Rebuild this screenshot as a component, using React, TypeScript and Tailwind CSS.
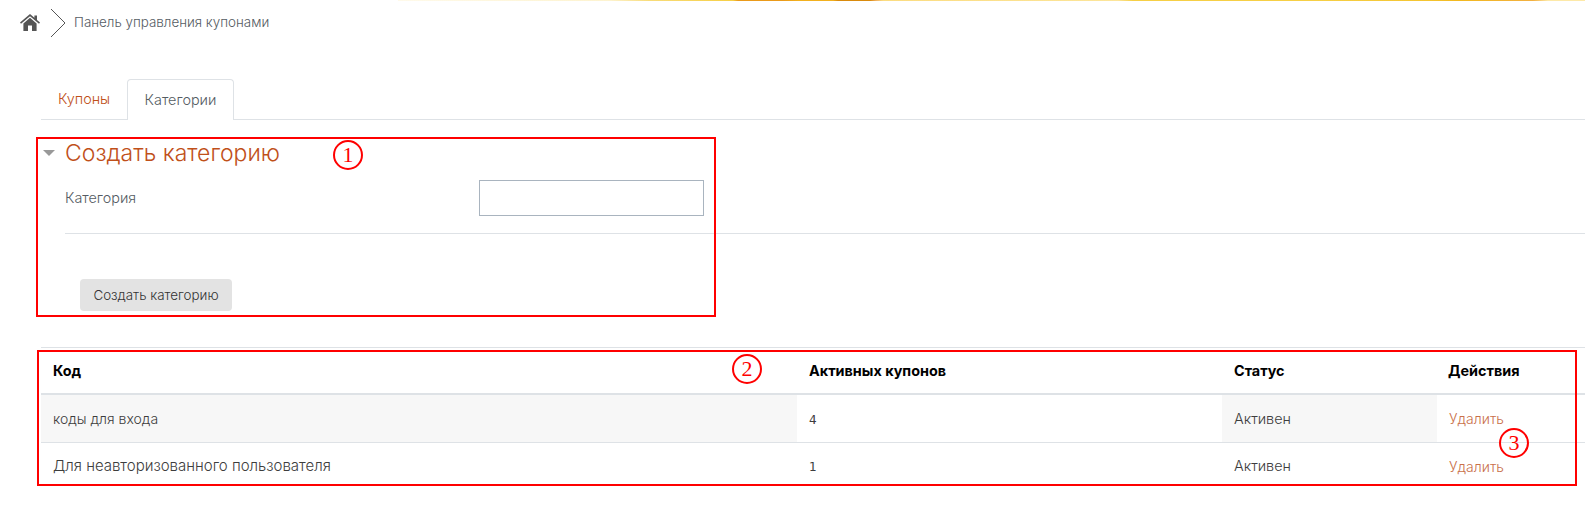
const font = "font-['Inter','Noto_Sans',sans-serif]";

function Marker({ n, className }: { n: number; className: string }) {
  return (
    <div className={`absolute flex h-[30px] w-[30px] items-center justify-center rounded-full border-2 border-[#ff0000] font-['Liberation_Serif',serif] text-[22px] leading-none text-[#ff0000] ${className}`}>
      {n}
    </div>
  );
}

const rows = [
  { code: 'коды для входа', size: 'h-[48px] text-[14px]', count: '4', striped: true },
  { code: 'Для неавторизованного пользователя', size: 'h-[46px] text-[15px]', count: '1', striped: false },
];

export default function App() {
  return (
    <div className={`relative h-[521px] w-[1585px] overflow-hidden bg-white text-[14.4px] font-light text-[#3d3d3d] ${font}`}>
      {/* top stripe */}
      <div className="ml-[398px] h-px bg-[linear-gradient(90deg,#fffaea_0px,#fdf3cf_212px,#f8dc7a_250px,#f6cf45_335px,#ea9a1a_340px,#ea9a1a_385px,#f2b01e_400px,#f2b01e_435px,#d98a0c_440px,#d98a0c_472px,#f0b060_478px,#fbdc80_485px,#fce59a_720px,#f6cf45_735px,#f6cf45_920px,#f4c430_1030px,#f2b81e_1060px,#f2b040_1135px,#fde9a8_1150px,#fde9a8_1187px)]" />

      {/* breadcrumb */}
      <div className="flex h-[43px] items-center pl-5">
        <svg viewBox="0 0 20 17" className="h-[17px] w-5 fill-[#555555]">
          <path d="M10 0 0 8.6l1 1.1L10 2.2l9 7.5 1-1.1-3-2.6V1.4h-2.6v2.4z" />
          <path d="M10 3.8 3.4 9.4V17h4.6v-5.4h4V17h4.6V9.4z" />
        </svg>
        <svg viewBox="0 0 16 30" className="ml-[10px] h-[30px] w-4 fill-none stroke-[#555555]">
          <path d="M1 1l14 14L1 29" />
        </svg>
        <span className="ml-2 text-[13.4px] text-[#555c63]">Панель управления купонами</span>
      </div>

      {/* tabs */}
      <div className="ml-[41px] mt-[35px] flex h-[41px] border-b border-[#dee2e6]">
        <div className="flex w-[86px] items-center justify-center text-[#c0501a]">Купоны</div>
        <div className="-mb-px flex h-[41px] w-[107px] items-center justify-center rounded-t border border-b-0 border-[#dee2e6] bg-white text-[#555c63]">Категории</div>
      </div>

      {/* create category form */}
      <div className="mt-[18px] flex items-center pl-[43px]">
        <div className="h-0 w-0 border-x-[6px] border-t-[6px] border-x-transparent border-t-[#999999]" />
        <h3 className="ml-[10px] text-[23px] leading-[30px] font-light text-[#c0501a]">Создать категорию</h3>
      </div>
      <div className="ml-[65px] mt-[12px] flex border-b border-[#dee2e6] pb-[17px]">
        <label className="w-[414px] pt-2 leading-5 text-[#555c63]">Категория</label>
        <input className="h-9 w-[225px] border border-[#a9b4bf] bg-white" />
      </div>
      <div className="ml-[80px] mt-[45px]">
        <button className="h-[32px] w-[152px] rounded bg-[#e3e3e3] text-[13.4px] text-[#333333]">Создать категорию</button>
      </div>

      {/* table */}
      <div className="ml-[41px] mt-[36px] border-t border-[#dee2e6]">
        <div className="grid h-[47px] grid-cols-[756px_425px_215px_1fr] items-center border-b-2 border-[#dee2e6] font-bold text-black">
          <div className="pl-3">Код</div>
          <div className="pl-3">Активных купонов</div>
          <div className="pl-3">Статус</div>
          <div className="pl-[11px]">Действия</div>
        </div>
        {rows.map((row) => (
          <div key={row.code} className={`grid grid-cols-[756px_425px_215px_1fr] border-b border-[#dee2e6] last:border-b-0 [&>div]:flex [&>div]:items-center ${row.size}`}>
            <div className={`pl-3 ${row.striped ? 'bg-[#f7f7f7]' : ''}`}>{row.code}</div>
            <div className="pl-3 pt-[2px] font-['DejaVu_Sans',sans-serif] text-[12px] font-normal">{row.count}</div>
            <div className={`pl-3 text-[14.4px] ${row.striped ? 'bg-[#f7f7f7]' : ''}`}>Активен</div>
            <div className="pl-3 text-[14px] text-[#c9704a]">Удалить</div>
          </div>
        ))}
      </div>

      {/* annotations */}
      <div className="absolute left-[36px] top-[137px] h-[180px] w-[680px] border-2 border-[#ff0000]" />
      <div className="absolute left-[37px] top-[350px] h-[136px] w-[1540px] border-2 border-[#ff0000]" />
      <Marker n={1} className="left-[333px] top-[140px]" />
      <Marker n={2} className="left-[732px] top-[354px]" />
      <Marker n={3} className="left-[1499px] top-[428px]" />
    </div>
  );
}
